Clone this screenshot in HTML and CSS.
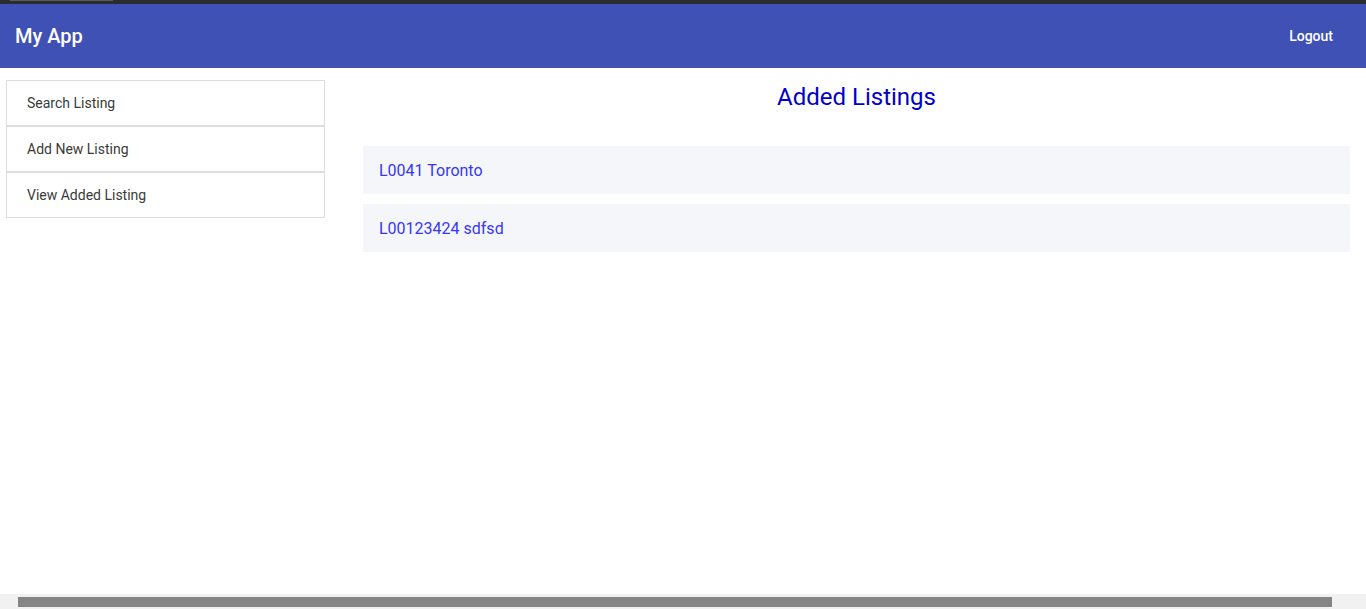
FILE: index.html
```html
<!DOCTYPE html>
<html lang="en">
<head>
<meta charset="utf-8">
<title>My App</title>
<link rel="stylesheet" href="styles.css">
</head>
<body>
<div class="chrome-strip"><span class="chrome-tab"></span></div>
<header class="toolbar">
  <span class="brand">My App</span>
  <button class="logout">Logout</button>
</header>
<div class="layout">
  <nav class="sidebar">
    <a class="nav-item">Search Listing</a>
    <a class="nav-item">Add New Listing</a>
    <a class="nav-item">View Added Listing</a>
  </nav>
  <main class="content">
    <h1 class="title">Added Listings</h1>
    <div class="cards">
      <div class="card">L0041 Toronto</div>
      <div class="card">L00123424 sdfsd</div>
    </div>
  </main>
</div>
<div class="hscroll"><div class="hscroll-thumb"></div></div>
</body>
</html>
```
FILE: styles.css
```css
* { box-sizing: border-box; }
html, body { margin: 0; padding: 0; height: 100%; }
body {
  font-family: Roboto, "Noto Sans", sans-serif;
  background: #fff;
  overflow: hidden;
}
.chrome-strip {
  height: 4px;
  background: #2b2b30;
  padding-left: 10px;
}
.chrome-tab {
  display: block;
  width: 103px;
  height: 1px;
  background: #5a5a60;
}
.toolbar {
  height: 64px;
  background: #3f51b5;
  color: #fff;
  display: flex;
  align-items: center;
  justify-content: space-between;
  padding: 0 16px 0 15px;
}
.brand {
  font-size: 20px;
  font-weight: 500;
}
.logout {
  background: none;
  border: none;
  color: #fff;
  font-family: inherit;
  font-size: 14px;
  font-weight: 500;
  padding: 0 17px;
  height: 36px;
}
.layout {
  display: flex;
  align-items: flex-start;
  padding: 12px 16px 0 6px;
  gap: 38px;
}
.sidebar {
  width: 319px;
  flex: none;
  display: flex;
  flex-direction: column;
}
.nav-item {
  display: block;
  height: 46px;
  line-height: 44px;
  border: 1px solid #dddddd;
  padding: 0 20px;
  font-size: 14px;
  color: #3a3a3a;
}
.content {
  flex: 1;
  min-width: 0;
}
.title {
  margin: 0;
  text-align: center;
  font-size: 24px;
  font-weight: 400;
  color: #0000cd;
  line-height: 32px;
  padding: 1px 0 1px;
}
.cards {
  margin-top: 32px;
  display: flex;
  flex-direction: column;
  gap: 10px;
}
.card {
  height: 48px;
  line-height: 46px;
  padding: 2px 16px 0;
  background: #f5f6fa;
  font-size: 16px;
  color: #3636f5;
}
.hscroll {
  position: fixed;
  left: 0;
  right: 0;
  bottom: 0;
  height: 15px;
  background: #f1f1f1;
  padding: 3px 34px 2px 18px;
}
.hscroll-thumb {
  height: 100%;
  background: #858585;
}
```
